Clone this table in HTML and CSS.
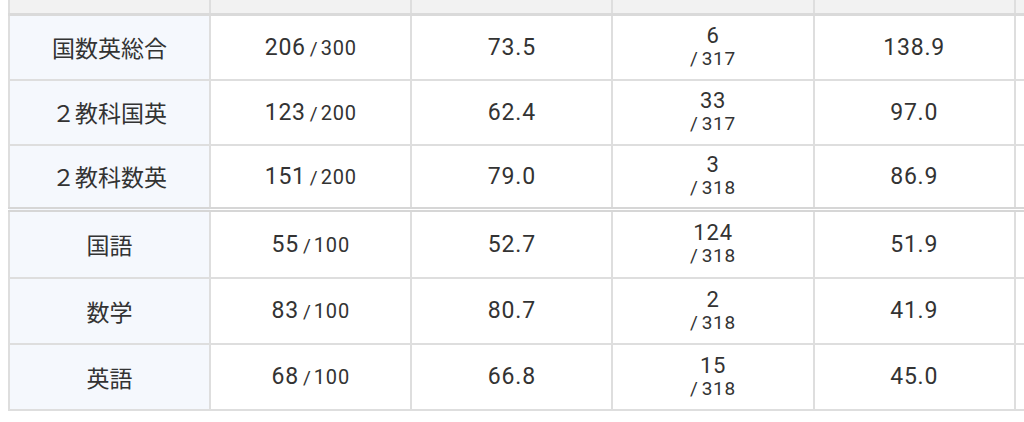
FILE: index.html
```html
<!DOCTYPE html>
<html lang="ja">
<head>
<meta charset="utf-8">
<link rel="stylesheet" href="styles.css">
</head>
<body>
<div class="wrap">
<table class="scores">
  <thead>
    <tr class="head"><th></th><th></th><th></th><th></th><th></th><th></th></tr>
  </thead>
  <tbody class="group">
    <tr>
      <th class="subj">国数英総合</th>
      <td><span class="val">206</span><span class="sep">/</span><span class="max">300</span></td>
      <td><span class="val">73.5</span></td>
      <td class="rank"><span class="r1">6</span><span class="r2"><span class="sep">/</span>317</span></td>
      <td><span class="val">138.9</span></td>
      <td></td>
    </tr>
    <tr>
      <th class="subj">２教科国英</th>
      <td><span class="val">123</span><span class="sep">/</span><span class="max">200</span></td>
      <td><span class="val">62.4</span></td>
      <td class="rank"><span class="r1">33</span><span class="r2"><span class="sep">/</span>317</span></td>
      <td><span class="val">97.0</span></td>
      <td></td>
    </tr>
    <tr>
      <th class="subj">２教科数英</th>
      <td><span class="val">151</span><span class="sep">/</span><span class="max">200</span></td>
      <td><span class="val">79.0</span></td>
      <td class="rank"><span class="r1">3</span><span class="r2"><span class="sep">/</span>318</span></td>
      <td><span class="val">86.9</span></td>
      <td></td>
    </tr>
  </tbody>
  <tbody class="group second">
    <tr>
      <th class="subj">国語</th>
      <td><span class="val">55</span><span class="sep">/</span><span class="max">100</span></td>
      <td><span class="val">52.7</span></td>
      <td class="rank"><span class="r1">124</span><span class="r2"><span class="sep">/</span>318</span></td>
      <td><span class="val">51.9</span></td>
      <td></td>
    </tr>
    <tr>
      <th class="subj">数学</th>
      <td><span class="val">83</span><span class="sep">/</span><span class="max">100</span></td>
      <td><span class="val">80.7</span></td>
      <td class="rank"><span class="r1">2</span><span class="r2"><span class="sep">/</span>318</span></td>
      <td><span class="val">41.9</span></td>
      <td></td>
    </tr>
    <tr>
      <th class="subj">英語</th>
      <td><span class="val">68</span><span class="sep">/</span><span class="max">100</span></td>
      <td><span class="val">66.8</span></td>
      <td class="rank"><span class="r1">15</span><span class="r2"><span class="sep">/</span>318</span></td>
      <td><span class="val">45.0</span></td>
      <td></td>
    </tr>
  </tbody>
</table>
</div>
</body>
</html>
```
FILE: styles.css
```css
html, body {
  margin: 0;
  padding: 0;
  background: #fff;
}
body {
  font-family: Roboto, "Noto Sans CJK JP", sans-serif;
  color: #333;
  overflow: hidden;
}
.wrap {
  margin: 0 0 0 8px;
  overflow: hidden;
  width: 1016px;
}
.scores {
  border-collapse: collapse;
  table-layout: fixed;
  width: 1209px;
}
.scores th, .scores td {
  border: 2px solid #dedede;
  text-align: center;
  vertical-align: middle;
  padding: 0;
  font-weight: normal;
}
.head th {
  height: 13px;
  background: #f2f2f2;
  border-top: 0;
  border-bottom: 3px solid #dadada;
}
.group tr {
  height: 65px;
}
.group.second tr {
  height: 66px;
}
.group.second tr:first-child {
  height: 68px;
}
.group.second tr:first-child th,
.group.second tr:first-child td {
  border-top: 5px double #d6d6d6;
}
.subj {
  background: #f5f8fd;
  font-family: "Noto Sans CJK JP", sans-serif;
  font-size: 23px;
  color: #333;
}
.val {
  font-size: 23px;
  letter-spacing: 0.8px;
}
.sep {
  font-size: 19px;
  margin: 0 3px 0 4px;
}
.max {
  font-size: 20px;
  letter-spacing: 0.8px;
}
.r1 {
  display: block;
  font-size: 22px;
  line-height: 24px;
  letter-spacing: 0.8px;
}
.r2 {
  display: block;
  font-size: 19px;
  line-height: 22px;
  letter-spacing: 0.8px;
}
.r2 .sep {
  margin: 0 3px 0 0;
}
```
